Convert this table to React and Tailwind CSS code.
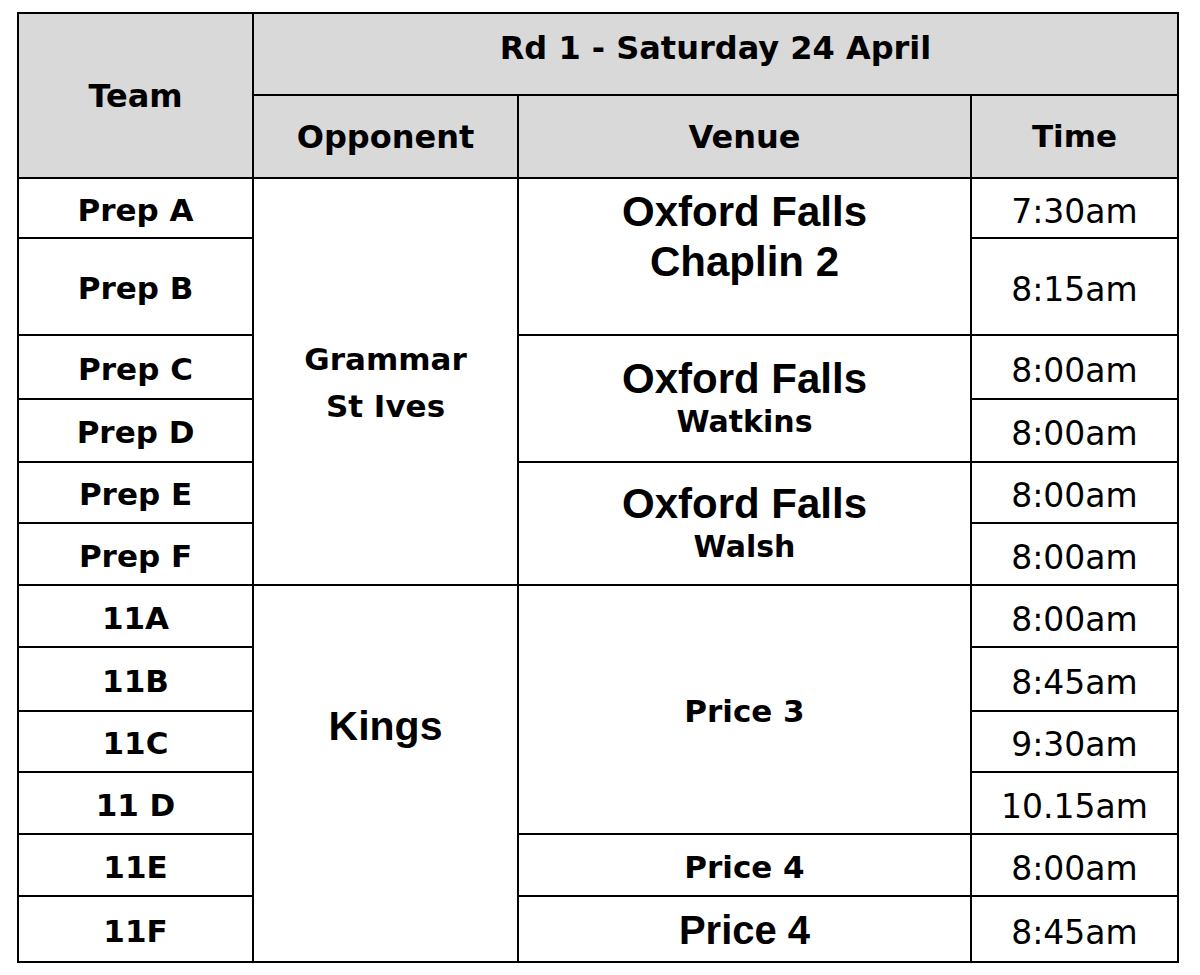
import React from "react";

const CG = "font-['DejaVu_Sans',sans-serif]";
const AR = "font-['Liberation_Sans',Arial,sans-serif]";

const teams = ["Prep A", "Prep B", "Prep C", "Prep D", "Prep E", "Prep F", "11A", "11B", "11C", "11 D", "11E", "11F"];
const times = ["7:30am", "8:15am", "8:00am", "8:00am", "8:00am", "8:00am", "8:00am", "8:45am", "9:30am", "10.15am", "8:00am", "8:45am"];
const rowStart = [
  "row-start-3",
  "row-start-4",
  "row-start-5",
  "row-start-6",
  "row-start-7",
  "row-start-8",
  "row-start-9",
  "row-start-10",
  "row-start-11",
  "row-start-12",
  "row-start-13",
  "row-start-14",
];

function Cell({ className = "", head = false, children }) {
  return (
    <div
      className={`${head ? "bg-[#d9d9d9]" : "bg-white"} flex flex-col items-center justify-center text-center text-black ${className}`}
    >
      {children}
    </div>
  );
}

export default function App() {
  return (
    <div className="w-[1200px] h-[975px] bg-white pt-[12px] pl-[17px]">
      <div className="grid w-[1162px] bg-black p-[2px] gap-[2px] grid-cols-[233px_263px_451px_205px] grid-rows-[80px_81px_58px_95px_62px_61px_59px_60px_60px_62px_59px_60px_60px_64px]">
        {/* Header */}
        <Cell head className={`col-start-1 row-start-1 row-span-2 ${CG} font-bold text-[32px] leading-none`}>
          Team
        </Cell>
        <Cell head className={`col-start-2 col-span-3 row-start-1 ${CG} font-bold text-[32px] leading-none pb-[13px]`}>
          Rd 1 - Saturday 24 April
        </Cell>
        <Cell head className={`col-start-2 row-start-2 ${CG} font-bold text-[32px] leading-none`}>
          Opponent
        </Cell>
        <Cell head className={`col-start-3 row-start-2 ${CG} font-bold text-[32px] leading-none`}>
          Venue
        </Cell>
        <Cell head className={`col-start-4 row-start-2 ${CG} font-bold text-[31px] leading-none`}>
          Time
        </Cell>

        {/* Teams */}
        {teams.map((t, i) => (
          <Cell key={t} className={`col-start-1 ${rowStart[i]} ${CG} font-bold text-[31px] leading-none pt-[4px]`}>
            {t}
          </Cell>
        ))}

        {/* Opponents */}
        <Cell className={`col-start-2 row-start-3 row-span-6 ${CG} font-bold text-[31px] leading-[47px] pt-[2px]`}>
          <span>Grammar</span>
          <span>St Ives</span>
        </Cell>
        <Cell className={`col-start-2 row-start-9 row-span-6 ${AR} font-bold text-[41px] leading-none pb-[94px]`}>
          Kings
        </Cell>

        {/* Venues */}
        <Cell className={`col-start-3 row-start-3 row-span-2 justify-start pt-[8px] ${AR} font-bold text-[42px] leading-[50px]`}>
          <span>Oxford Falls</span>
          <span>Chaplin 2</span>
        </Cell>
        <Cell className="col-start-3 row-start-5 row-span-2 pt-[2px]">
          <span className={`${AR} font-bold text-[42px] leading-[44px]`}>Oxford Falls</span>
          <span className={`${CG} font-bold text-[30px] leading-[42px]`}>Watkins</span>
        </Cell>
        <Cell className="col-start-3 row-start-7 row-span-2 pt-[2px]">
          <span className={`${AR} font-bold text-[42px] leading-[44px]`}>Oxford Falls</span>
          <span className={`${CG} font-bold text-[30px] leading-[42px]`}>Walsh</span>
        </Cell>
        <Cell className={`col-start-3 row-start-9 row-span-4 ${CG} font-bold text-[31px] leading-none pt-[4px]`}>
          Price 3
        </Cell>
        <Cell className={`col-start-3 row-start-13 ${CG} font-bold text-[31px] leading-none pt-[4px]`}>
          Price 4
        </Cell>
        <Cell className={`col-start-3 row-start-14 ${AR} font-bold text-[40px] leading-none pt-[2px]`}>
          Price 4
        </Cell>

        {/* Times */}
        {times.map((t, i) => (
          <Cell key={i} className={`col-start-4 ${rowStart[i]} ${CG} font-normal text-[33px] leading-none pt-[6px]`}>
            {t}
          </Cell>
        ))}
      </div>
    </div>
  );
}
